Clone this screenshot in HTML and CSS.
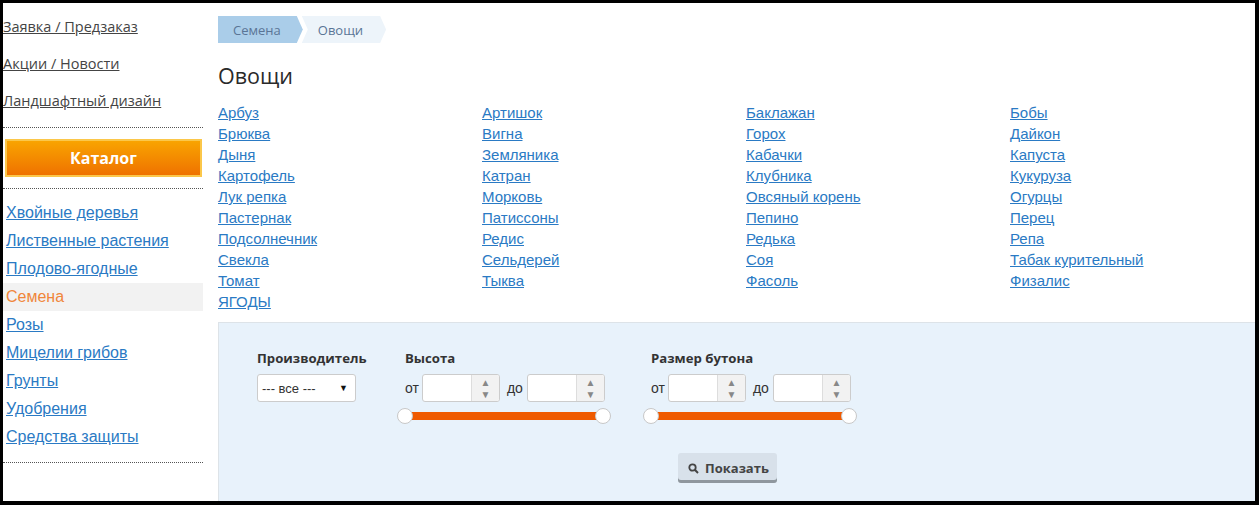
FILE: index.html
```html
<!DOCTYPE html>
<html lang="ru">
<head>
    <meta charset="UTF-8">
    <title>Овощи</title>
    <link rel="stylesheet" href="styles.css">
</head>
<body>
<div class="page">
    <div class="sidebar">
        <div class="top-links">
            <a href="#">Заявка / Предзаказ</a>
            <a href="#">Акции / Новости</a>
            <a href="#">Ландшафтный дизайн</a>
        </div>
        <div class="dots"></div>
        <a class="catalog-btn" href="#">Каталог</a>
        <div class="dots"></div>
        <ul class="cats">
            <li><a href="#">Хвойные деревья</a></li>
            <li><a href="#">Лиственные растения</a></li>
            <li><a href="#">Плодово-ягодные</a></li>
            <li class="active"><a href="#">Семена</a></li>
            <li><a href="#">Розы</a></li>
            <li><a href="#">Мицелии грибов</a></li>
            <li><a href="#">Грунты</a></li>
            <li><a href="#">Удобрения</a></li>
            <li><a href="#">Средства защиты</a></li>
        </ul>
        <div class="dots"></div>
    </div>

    <div class="main">
        <div class="crumbs">
            <a class="crumb first" href="#">Семена</a>
            <span class="crumb last">Овощи</span>
        </div>
        <h1>Овощи</h1>
        <div class="veg-grid">
            <a href="#">Арбуз</a><a href="#">Артишок</a><a href="#">Баклажан</a><a href="#">Бобы</a>
            <a href="#">Брюква</a><a href="#">Вигна</a><a href="#">Горох</a><a href="#">Дайкон</a>
            <a href="#">Дыня</a><a href="#">Земляника</a><a href="#">Кабачки</a><a href="#">Капуста</a>
            <a href="#">Картофель</a><a href="#">Катран</a><a href="#">Клубника</a><a href="#">Кукуруза</a>
            <a href="#">Лук репка</a><a href="#">Морковь</a><a href="#">Овсяный корень</a><a href="#">Огурцы</a>
            <a href="#">Пастернак</a><a href="#">Патиссоны</a><a href="#">Пепино</a><a href="#">Перец</a>
            <a href="#">Подсолнечник</a><a href="#">Редис</a><a href="#">Редька</a><a href="#">Репа</a>
            <a href="#">Свекла</a><a href="#">Сельдерей</a><a href="#">Соя</a><a href="#">Табак курительный</a>
            <a href="#">Томат</a><a href="#">Тыква</a><a href="#">Фасоль</a><a href="#">Физалис</a>
            <a href="#">ЯГОДЫ</a>
        </div>

        <div class="filter">
            <div class="filter-row">
                <div class="fgroup maker">
                    <div class="flabel">Производитель</div>
                    <div class="select"><span>--- все ---</span><span class="caret">▼</span></div>
                </div>
                <div class="fgroup range">
                    <div class="flabel">Высота</div>
                    <div class="range-inputs">
                        <span class="rl">от</span>
                        <div class="spin"><div class="spin-field"></div><div class="spin-btns"><span>▲</span><span>▼</span></div></div>
                        <span class="rl">до</span>
                        <div class="spin"><div class="spin-field"></div><div class="spin-btns"><span>▲</span><span>▼</span></div></div>
                    </div>
                    <div class="slider"><span class="knob left"></span><span class="knob right"></span></div>
                </div>
                <div class="fgroup range">
                    <div class="flabel">Размер бутона</div>
                    <div class="range-inputs">
                        <span class="rl">от</span>
                        <div class="spin"><div class="spin-field"></div><div class="spin-btns"><span>▲</span><span>▼</span></div></div>
                        <span class="rl">до</span>
                        <div class="spin"><div class="spin-field"></div><div class="spin-btns"><span>▲</span><span>▼</span></div></div>
                    </div>
                    <div class="slider"><span class="knob left"></span><span class="knob right"></span></div>
                </div>
            </div>
            <button class="show-btn">
                <svg width="11" height="11" viewBox="0 0 11 11"><circle cx="4.5" cy="4.5" r="3.2" fill="none" stroke="#444" stroke-width="1.8"/><line x1="6.8" y1="6.8" x2="10" y2="10" stroke="#444" stroke-width="2"/></svg>
                Показать
            </button>
        </div>
    </div>
</div>
</body>
</html>
```

FILE: styles.css
```css
html, body { margin: 0; padding: 0; background: #000; }
.page { display: flex; margin: 3px 4px 4px 3px; height: 498px; background: #fff; overflow: hidden; }

.sidebar { width: 200px; flex: none; font-family: "Liberation Sans", Arial, sans-serif; }
.top-links { padding-top: 5px; padding-bottom: 8px; }
.top-links a { display: block; line-height: 37px; font-family: "Open Sans", sans-serif; font-size: 14.5px; color: #444; text-decoration: underline; }
.dots { border-top: 1px dotted #555; height: 0; }
.catalog-btn { display: block; margin: 11px 1px 11px 2px; height: 34px; line-height: 34px; text-align: center; border: 2px solid #fbc74a; background: linear-gradient(#f9a400, #ef7200); color: #fff; font-family: "Open Sans", sans-serif; font-weight: 700; font-size: 16px; text-decoration: none; }
.cats { list-style: none; margin: 10px 0 11px; padding: 0; }
.cats li { line-height: 28px; padding-left: 3px; }
.cats a { font-size: 16px; color: #2a7ac4; text-decoration: underline; }
.cats li.active { background: #f2f2f2; }
.cats li.active a { color: #f0863a; text-decoration: none; }

.main { flex: 1; padding: 13px 0 0 15px; display: flex; flex-direction: column; }
.crumbs { display: flex; height: 27px; }
.crumb { display: flex; align-items: center; font-family: "Open Sans", sans-serif; font-size: 13px; color: #5a7596; text-decoration: none; }
.crumb.first { background: #aacde9; padding: 0 22px 0 15px; clip-path: polygon(0 0, calc(100% - 6px) 0, 100% 50%, calc(100% - 6px) 100%, 0 100%); }
.crumb.last { background: #edf4fa; padding: 0 23px 0 16px; margin-left: -1px; clip-path: polygon(0 0, calc(100% - 6px) 0, 100% 50%, calc(100% - 6px) 100%, 0 100%, 6px 50%); }
h1 { margin: 18px 0 11px; font-family: "Open Sans", sans-serif; font-weight: 500; font-size: 21.5px; line-height: 30px; color: #2a2a2a; }

.veg-grid { display: grid; grid-template-columns: repeat(4, 264px); font-family: "Liberation Sans", Arial, sans-serif; }
.veg-grid a { line-height: 21px; font-size: 15px; color: #2a7ac4; text-decoration: underline; justify-self: start; }

.filter { margin-top: 10px; flex: 1; background: #e8f2fb; border-top: 1px solid #dde3e8; border-left: 1px solid #dde3e8; padding: 25px 0 0 38px; font-family: "Open Sans", sans-serif; }
.filter-row { display: flex; }
.fgroup.maker { width: 148px; }
.fgroup.range { width: 246px; }
.flabel { font-weight: 700; font-size: 13.2px; line-height: 20px; color: #333; margin-bottom: 6px; }
.select { height: 26px; border: 1px solid #ccc; border-radius: 3px; background: #fff; display: flex; align-items: center; justify-content: space-between; padding: 0 7px 0 4px; width: 86px; font-family: "Liberation Sans", Arial, sans-serif; font-size: 13px; color: #333; }
.caret { font-size: 9px; color: #111; }
.range-inputs { display: flex; align-items: center; }
.rl { font-family: "Liberation Sans", Arial, sans-serif; font-size: 14px; color: #333; }
.rl:first-child { margin-right: 3px; }
.spin + .rl { margin: 0 4px 0 7px; }
.spin { display: flex; width: 78px; height: 28px; box-sizing: border-box; border: 1px solid #ccc; border-radius: 3px; background: #fff; overflow: hidden; }
.spin-field { flex: 1; }
.spin-btns { width: 27px; border-left: 1px solid #ddd; background: #f2f2f2; display: flex; flex-direction: column; align-items: center; justify-content: center; font-size: 10px; line-height: 12px; color: #888; }
.slider { position: relative; width: 198px; height: 8px; margin-top: 10px; background: #ef5a00; }
.knob { position: absolute; top: -4px; width: 14px; height: 14px; border-radius: 50%; background: #fff; border: 1px solid #c8c8c8; }
.knob.left { left: -8px; }
.knob.right { right: -8px; }

.show-btn { display: flex; align-items: center; gap: 6px; margin: 33px 0 0 421px; height: 30px; width: 99px; padding: 0 0 0 10px; border: none; border-radius: 3px; background: #d8e1ea; box-shadow: inset 0 -3px 0 #8f979e; font-family: "Open Sans", sans-serif; font-weight: 700; font-size: 13px; color: #444; cursor: pointer; }
```
